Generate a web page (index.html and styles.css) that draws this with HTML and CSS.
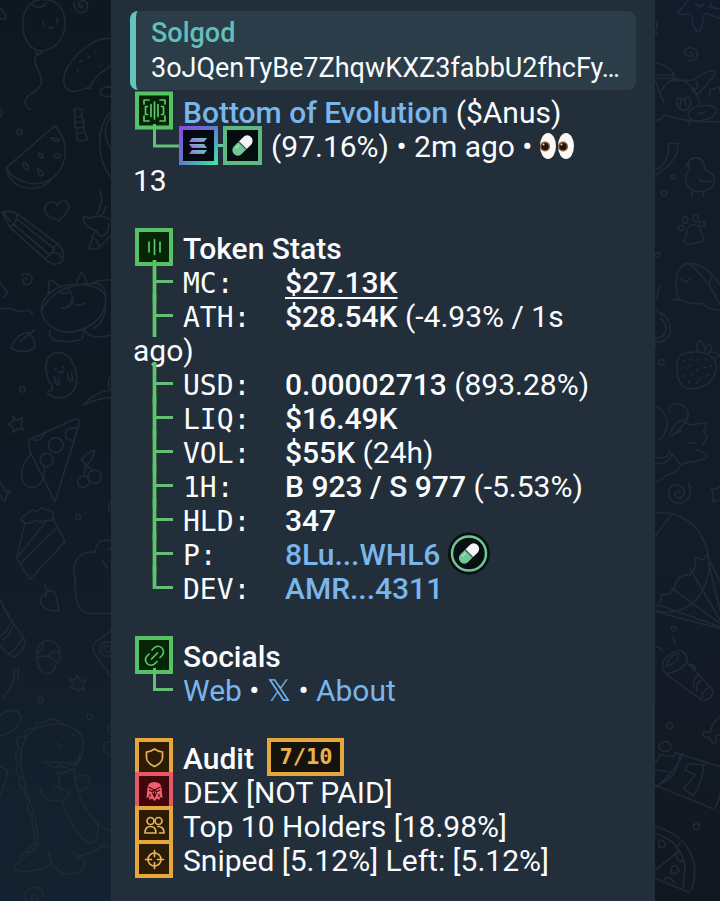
FILE: index.html
```html
<!DOCTYPE html>
<html lang="en">
  <head>
    <meta charset="UTF-8" />
    <meta name="viewport" content="width=device-width, initial-scale=1.0" />
    <title>Solgod - Bottom of Evolution</title>
    <link rel="stylesheet" href="styles.css">
  </head>
  <body>
    <!-- Shared icons -->
    <svg class="defs" aria-hidden="true">
      <defs>
        <linearGradient id="sol-frame" x1="0" y1="0" x2="1" y2="1">
          <stop offset="0" stop-color="#8a4be0" />
          <stop offset="0.45" stop-color="#5f78d0" />
          <stop offset="1" stop-color="#3fe0a8" />
        </linearGradient>
        <linearGradient id="sol-bars" x1="0" y1="1" x2="1" y2="0">
          <stop offset="0" stop-color="#a65be8" />
          <stop offset="0.5" stop-color="#8f93d8" />
          <stop offset="1" stop-color="#4fdcae" />
        </linearGradient>
      </defs>
      <symbol id="branch" viewBox="0 0 50 34" overflow="visible">
        <path class="stem-edge" d="M21.5 -6V37" />
        <path class="stem" d="M21.5 -6V37M21.5 15.5H40" />
      </symbol>
      <symbol id="branch-end" viewBox="0 0 50 34" overflow="visible">
        <path class="stem-edge" d="M21.5 -6V17" />
        <path class="stem" d="M21.5 -6V15.5H40" />
      </symbol>
      <symbol id="pill" viewBox="0 0 24 24">
        <g transform="rotate(45 12 12)">
          <path d="M7.5 12V6.5a4.5 4.5 0 0 1 9 0V12Z" fill="#f6f4f6" />
          <path d="M7.5 12V17.5a4.5 4.5 0 0 0 9 0V12Z" fill="#6fc795" />
          <path d="M7.5 12H16.5" stroke="#3c4a48" stroke-width="1" />
          <path d="M9.7 14v3.5" stroke="#a5e3bf" stroke-width="1.2" stroke-linecap="round" />
        </g>
      </symbol>
    </svg>

    <div class="chat">
      <aside class="wallpaper left" aria-hidden="true">
        <svg viewBox="0 0 333 2703" preserveAspectRatio="xMinYMin slice">
          <!-- balloon, swirl, bean -->
          <path d="M115 153C80 140 66 100 68 70C70 20 95 -2 130 -2C170 -2 195 25 195 70C195 115 165 155 115 153ZM95 12C105 25 130 25 138 10M130 62v14M171 54v14M145 80q8 10 16 0M107 155l6 10l12 -8M108 168C95 200 125 210 125 245C125 275 70 280 76 310C78 322 85 328 92 327" />
          <path d="M222 5C222 50 265 45 262 15C260 -5 235 0 236 15C238 28 252 22 246 14M0 25Q20 40 17 55Q10 60 0 55" />
          <path d="M333 116C290 108 235 150 200 205C185 235 190 270 215 274C240 278 255 258 270 266C275 240 290 225 333 198M333 262C305 255 295 275 305 286Q315 292 333 288M240 185l4 -4M265 172l4 -3M285 155l3 2M300 200l3 -3M230 210l4 2" />
          <!-- candy, watermelon -->
          <path d="M222 330q12 -10 25 0l-3 14q12 25 7 48l12 25q-15 10 -34 2l3 -22q-12 -28 -7 -50ZM224 347q12 8 22 -2M222 362q14 10 28 0M224 380q14 8 28 -2M230 397q12 6 22 -4" />
          <path d="M165 377L19 503C35 540 100 565 145 542C195 515 220 440 165 377ZM19 503C25 560 100 590 155 540M152 416q12 -8 26 4q-12 8 -26 -4M115 459q14 0 14 15q-14 0 -14 -15M159 466q14 -12 24 2q-14 12 -24 -2M70 488q16 4 16 22q-18 0 -16 -22M113 506q16 6 16 20q-14 8 -16 -20M333 335Q298 370 299 430Q302 500 333 532M333 350Q310 380 318 415L333 450" />
          <circle cx="59" cy="396" r="8" /><path d="M0 325q12 12 0 24" />
          <!-- heart, pencil, plane -->
          <path d="M172 617C160 595 128 610 136 635C142 655 165 652 177 663C185 650 208 640 206 618C202 598 175 600 172 617Z" />
          <path d="M6 637Q30 630 51 641L177 735Q200 765 185 785Q170 800 145 785L30 682ZM6 637L30 682Q50 670 51 641M40 672L150 765M52 658L165 748M158 760Q160 730 178 735M138 780Q145 760 160 758Q180 755 182 775M20 632l-8 10l22 24" />
          <path d="M298 570Q315 600 290 642M318 620Q315 635 302 648M333 660Q300 640 270 655L250 650Q250 680 285 690L267 745Q290 755 305 735L333 705M290 690Q295 715 312 705Q330 690 325 670M275 712Q290 715 298 740" />
          <!-- swirl, cat, leaf -->
          <path d="M65 825Q80 815 95 830Q100 850 80 855Q65 850 70 838Q78 828 84 838M0 845L24 880L10 890M0 926L30 925Q60 940 85 930L98 942" />
          <path d="M124 935C120 890 170 850 230 853C290 855 318 870 317 900C316 960 260 990 215 996C165 1000 128 965 124 935ZM145 880L147 845Q155 835 175 858M230 850L243 818Q255 820 262 855M124 935Q160 850 285 850Q310 850 317 880M333 840Q300 838 275 850M150 992Q145 1015 170 1022Q210 1030 245 1018L253 992M255 985Q255 1005 285 1010Q310 1012 333 1005M280 985Q310 975 317 920M182 880l22 -2M205 865L218 890Q215 925 185 925M215 900Q225 925 253 910" />
          <path d="M32 1045Q50 1000 85 998Q110 1020 103 1045Q70 1065 32 1045ZM60 1025L103 990" />
          <!-- ghost, pizza, star -->
          <path d="M145 1140C130 1090 140 1060 175 1057C220 1060 235 1120 228 1155C220 1190 175 1205 145 1182Q138 1170 155 1172Q162 1160 145 1140ZM165 1108l4 -2M187 1102l4 -2M175 1115q10 8 16 -4M163 1130Q165 1160 178 1152L175 1135M203 1120Q205 1148 218 1142L215 1120" />
          <circle cx="67" cy="1168" r="8" />
          <path d="M333 1130Q318 1150 333 1170M333 1170Q285 1175 249 1216Q290 1195 333 1192M40 1247L48 1262L68 1252L63 1274L72 1290L53 1285L40 1298L38 1280L24 1272L38 1266Z" />
          <path d="M85 1320L225 1257Q240 1255 238 1270L165 1505L90 1355ZM98 1313Q115 1335 135 1298M228 1285Q195 1280 196 1305Q200 1322 216 1320" /><circle cx="167" cy="1335" r="22" />
          <circle cx="140" cy="1380" r="20" /><path d="M92 1362Q60 1400 65 1435Q75 1470 110 1460Q140 1440 132 1395" />
          <!-- cherries, cake -->
          <circle cx="250" cy="1445" r="17" /><circle cx="284" cy="1430" r="20" />
          <path d="M252 1428L258 1395L245 1380Q260 1355 283 1352Q280 1380 258 1395L278 1412M0 1445L20 1475L32 1475L20 1485L15 1505L0 1485" />
          <path d="M75 1568Q60 1565 66 1552Q80 1538 85 1540Q95 1525 110 1535Q130 1515 140 1530Q165 1530 160 1550Q160 1565 140 1560Q120 1572 105 1560Q90 1575 75 1568ZM75 1568L50 1675L90 1738L195 1625L160 1558M50 1675L140 1562M62 1690L172 1582" />
          <circle cx="234" cy="1551" r="8" />
          <!-- leaf, pepper, pencil -->
          <path d="M135 1755L142 1775Q120 1790 122 1805Q130 1835 177 1832L168 1785Q155 1765 142 1775ZM138 1775v16M333 1505Q320 1520 333 1538M333 1623Q290 1610 285 1657Q235 1650 222 1700L228 1790Q235 1845 280 1840H333M307 1680l15 25M318 1650l15 -4M220 1710l8 40" />
          <path d="M0 1800L35 1862L75 1920Q80 1940 45 1970Q25 1970 0 1935M35 1862Q25 1890 0 1910M42 1870Q35 1900 8 1920M68 1915Q50 1945 30 1960M5 1810l22 45" />
          <!-- acorn, star, camera -->
          <path d="M110 1975Q105 1925 145 1921Q185 1925 178 1980Q175 1990 170 1985Q165 2020 138 2022Q115 2015 113 1985ZM113 1972Q140 1960 170 1985M112 1960Q130 1955 128 1930M145 1970Q155 1950 178 1958M232 2025L240 2042L257 2040L248 2055L255 2068L240 2065L238 2073L225 2065L210 2063L220 2050L210 2038L226 2040Z" />
          <circle cx="121" cy="2099" r="8" /><circle cx="269" cy="2150" r="8" />
          <path d="M333 1892L287 1925Q275 1940 280 1955L333 2030M42 2002Q50 2050 8 2093M55 2005v35M0 2145Q20 2130 45 2132Q70 2140 60 2165Q40 2200 0 2208M333 2170Q315 2190 333 2205M333 2225Q305 2225 312 2248Q325 2270 333 2270M0 2300L22 2310L20 2335L0 2390" />
          <circle cx="322" cy="1947" r="22" /><circle cx="322" cy="1947" r="10" />
          <!-- dinosaur -->
          <path d="M170 2320Q240 2320 250 2240C255 2190 200 2165 150 2175C80 2180 60 2230 62 2290C70 2380 125 2460 112 2540Q90 2560 50 2590Q35 2610 70 2614Q120 2615 155 2590M146 2555Q150 2600 190 2620Q250 2625 255 2590Q255 2575 235 2575L220 2555M130 2287L225 2288Q245 2270 238 2260M145 2292Q160 2310 178 2295Q195 2310 208 2293Q225 2300 230 2285M178 2320V2365M120 2367C130 2410 185 2410 205 2390Q212 2365 190 2368L162 2360M188 2405C205 2465 240 2520 270 2530Q300 2530 293 2470C250 2430 225 2370 222 2310M228 2330Q270 2315 270 2345Q260 2370 240 2372M293 2470Q310 2490 333 2492M235 2568Q280 2560 310 2535L333 2545" />
          <path d="M75 2215Q70 2180 105 2185Q110 2160 138 2168Q150 2145 190 2172M62 2250Q45 2235 52 2215Q65 2205 75 2210M60 2290Q38 2275 52 2250M62 2330Q42 2320 50 2290M72 2370Q50 2360 60 2330M85 2400Q70 2390 75 2372M98 2450Q80 2440 85 2410M108 2500Q92 2480 98 2452M110 2540Q98 2520 106 2500M85 2560Q80 2545 105 2530M62 2582Q60 2555 90 2555M172 2228l8 14M214 2200l8 9" />
          <path d="M80 2703Q65 2670 100 2662Q130 2665 130 2690M98 2703Q90 2685 105 2682Q115 2685 112 2700" />
        </svg>
      </aside>

      <main class="bubble">
        <blockquote class="reply">
          <strong>Solgod</strong>
          <p>3oJQenTyBe7ZhqwKXZ3fabbU2fhcFy…</p>
        </blockquote>

        <div class="message">
          <section class="token">
            <p>
              <svg class="icon" viewBox="0 0 50 34" aria-hidden="true">
                <rect class="box" x="4" y="-2.5" width="34" height="34" />
                <g class="glyph">
                  <path d="M11 8V4h5M27 4h5v4M11 20v5h5M27 25h5v-5M14.5 10.500h-2v8h2M28.500 10.500h2v8h-2" />
                  <path d="M18 8.500v12M21.500 6v17M25 8.500v12" />
                </g>
                <path class="stem" d="M21.5 28V50H47" />
              </svg><a href="#" class="name">Bottom of Evolution</a> ($Anus)
            </p>
            <p>
              <svg class="chain" viewBox="0 0 138 34" aria-hidden="true">
                <path d="M84 15.5h7" stroke="#5cc9a0" stroke-width="3" />
                <rect x="48" y="-2" width="35" height="35" fill="#060910" stroke="url(#sol-frame)" stroke-width="4" />
                <g fill="url(#sol-bars)">
                  <path d="M59 8h15l-3 4H56Z" />
                  <path d="M56 14h15l3 4H59Z" />
                  <path d="M59 20h15l-3 4H56Z" />
                </g>
                <rect x="92" y="-2" width="35" height="35" fill="#060d0f" stroke="#5db883" stroke-width="4" />
                <use href="#pill" x="95" y="1" width="29" height="29" />
              </svg>(97.16%) • 2m ago •
              <svg class="eyes" viewBox="0 0 34 28" role="img" aria-label="eyes">
                <ellipse cx="8" cy="14" rx="8" ry="13" fill="#fbf8f7" />
                <ellipse cx="26" cy="14" rx="8" ry="13" fill="#fbf8f7" />
                <circle cx="5" cy="14.5" r="5" fill="#8a572f" /><circle cx="5" cy="14.5" r="3.5" fill="#25120c" />
                <circle cx="23" cy="14.5" r="5" fill="#8a572f" /><circle cx="23" cy="14.5" r="3.5" fill="#25120c" />
                <circle cx="3.5" cy="12.5" r="1" fill="#e8dcd4" /><circle cx="21.5" cy="12.5" r="1" fill="#e8dcd4" />
              </svg>
              13
            </p>
          </section>

          <section>
            <h2>
              <svg class="icon" viewBox="0 0 50 34" aria-hidden="true">
                <rect class="box" x="4" y="-2" width="34" height="34" />
                <path class="glyph" d="M16 10v10M21.5 7.500v15M27 10v10" />
                <path class="stem" d="M21.5 28V40" />
              </svg>Token Stats
            </h2>
            <ul class="stats">
              <li><svg class="icon" aria-hidden="true"><use href="#branch" width="50" height="34" /></svg><span class="label">MC:</span><b><u>$27.13K</u></b></li>
              <li><svg class="icon" aria-hidden="true"><use href="#branch" width="50" height="34" /></svg><span class="label">ATH:</span><b>$28.54K</b> (-4.93% / 1s ago)</li>
              <li><svg class="icon" aria-hidden="true"><use href="#branch" width="50" height="34" /></svg><span class="label">USD:</span><b>0.00002713</b> (893.28%)</li>
              <li><svg class="icon" aria-hidden="true"><use href="#branch" width="50" height="34" /></svg><span class="label">LIQ:</span><b>$16.49K</b></li>
              <li><svg class="icon" aria-hidden="true"><use href="#branch" width="50" height="34" /></svg><span class="label">VOL:</span><b>$55K</b> (24h)</li>
              <li><svg class="icon" aria-hidden="true"><use href="#branch" width="50" height="34" /></svg><span class="label">1H:</span><b>B 923 / S 977</b> (-5.53%)</li>
              <li><svg class="icon" aria-hidden="true"><use href="#branch" width="50" height="34" /></svg><span class="label">HLD:</span><b>347</b></li>
              <li>
                <svg class="icon" aria-hidden="true"><use href="#branch" width="50" height="34" /></svg><span class="label">P:</span><a href="#" class="name">8Lu...WHL6</a>
                <svg class="coin" viewBox="0 0 42 34" aria-hidden="true">
                  <circle cx="21" cy="15.5" r="21" fill="#0a1012" />
                  <circle cx="21" cy="15.5" r="17" fill="none" stroke="#6fc795" stroke-width="2.5" />
                  <use href="#pill" x="6.5" y="1" width="29" height="29" />
                </svg>
              </li>
              <li><svg class="icon" aria-hidden="true"><use href="#branch-end" width="50" height="34" /></svg><span class="label">DEV:</span><a href="#" class="name">AMR...4311</a></li>
            </ul>
          </section>

          <section>
            <h2>
              <svg class="icon" viewBox="0 0 50 34" aria-hidden="true">
                <rect class="box" x="4" y="-2" width="34" height="34" />
                <path class="glyph" d="M19 10L21 8A5.400 5.400 0 0 1 29 15.500L27 17.500M24 21.500L22 23.500A5.400 5.400 0 0 1 14 16L16 14M18.500 19L24.500 13" />
                <path class="stem" d="M21.5 28V49.5H40" />
              </svg>Socials
            </h2>
            <p class="indent"><a href="#">Web</a> • <a href="#">𝕏</a> • <a href="#">About</a></p>
          </section>

          <section>
            <h2>
              <svg class="icon warn" viewBox="0 0 50 34" aria-hidden="true">
                <rect class="box" x="4" y="-2" width="34" height="34" />
                <path class="glyph" d="M21.5 7Q25 9.5 29.5 10V16Q29 21 21.5 24.5Q14 21 13.5 16V10Q18 9.5 21.5 7Z" />
              </svg>Audit <span class="score">7/10</span>
            </h2>
            <ul>
              <li>
                <svg class="icon bad" viewBox="0 0 50 34" aria-hidden="true">
                  <rect class="box" x="4" y="-2" width="34" height="34" />
                  <path d="M21.5 6Q28 6 28.5 12L29.5 22L27 21L26.5 24L24 22.5L21.5 25L19 22.5L16.5 24L16 21L13.5 22L14.5 12Q15 6 21.5 6Z" fill="#f0616c" />
                  <path d="M15.5 11L20.5 13.5L19.5 16L16 14M27.5 11L22.5 13.5L23.5 16L27 14M21.5 13V20M19.5 17L21.5 21L23.5 17M17 18v3M26 18v3" fill="none" stroke="#4a0710" stroke-width="1.2" />
                </svg>DEX [NOT PAID]
              </li>
              <li>
                <svg class="icon warn" viewBox="0 0 50 34" aria-hidden="true">
                  <rect class="box" x="4" y="-2" width="34" height="34" />
                  <g class="glyph">
                    <circle cx="17.5" cy="11" r="3.5" /><circle cx="25.5" cy="11" r="3.5" />
                    <path d="M12 23Q12 16.5 17.5 16.5Q23 16.5 23 23ZM25 16.5Q31 16.500 31 23H26.5" />
                  </g>
                </svg>Top 10 Holders [18.98%]
              </li>
              <li>
                <svg class="icon warn" viewBox="0 0 50 34" aria-hidden="true">
                  <rect class="box" x="4" y="-2" width="34" height="34" />
                  <g class="glyph">
                    <circle cx="21.5" cy="15.5" r="6.5" />
                    <path d="M21.5 6.5v6M21.5 18.5v6M12.500 15.5h6M24.5 15.5h6" />
                  </g>
                </svg>Sniped [5.12%] Left: [5.12%]
              </li>
            </ul>
          </section>
        </div>
      </main>

      <aside class="wallpaper right" aria-hidden="true">
        <svg viewBox="45 0 195 2703" preserveAspectRatio="xMinYMin slice">
          <!-- starfish, swirl, cow -->
          <path d="M145 0Q135 15 112 38Q115 45 150 42Q158 45 158 70Q165 95 175 95Q190 90 188 50Q195 38 205 42L240 55M165 12l10 2M170 16q14 8 22 -6M215 10L205 20L240 28M45 60q10 15 2 30M45 95q10 8 0 10" />
          <path d="M135 165Q130 145 150 142Q175 145 172 165Q165 185 145 182M150 155Q162 158 155 170Q145 170 140 162" />
          <path d="M45 187Q100 200 105 235H45M45 240L70 305M45 225H100M65 270Q90 230 125 240Q160 250 180 312M95 243L160 240Q200 210 225 212Q235 220 180 275Q170 290 155 268Q180 270 170 245M110 305Q110 285 130 300Q145 280 152 305Q150 330 130 332Q112 325 110 305ZM122 300v18M136 298v20M210 285Q205 265 222 268Q240 250 240 280M145 348Q145 320 185 318Q230 310 228 335Q220 360 170 363Q150 362 145 348ZM175 338q10 8 22 -4M45 360Q70 362 70 345Q150 370 240 365M140 360l10 15" />
          <!-- horn, duck, paw -->
          <path d="M45 510Q90 490 85 432L113 430Q120 480 45 526" /><circle cx="99" cy="530" r="6" /><circle cx="72" cy="580" r="8" />
          <path d="M147 505Q140 475 168 473Q195 475 193 508Q225 520 224 545Q215 575 170 575Q135 565 137 530Q138 515 152 510M147 485l-8 12l10 4M178 538Q190 550 215 543M157 575v15M190 575v15" />
          <path d="M145 680Q160 668 175 680Q195 710 188 722Q170 728 160 730Q140 738 132 722Q142 700 145 680Z" /><circle cx="123" cy="684" r="8" /><ellipse cx="135" cy="660" rx="8" ry="10" /><ellipse cx="167" cy="655" rx="8" ry="10" /><circle cx="186" cy="672" r="8" />
          <!-- whale, cup, strawberry -->
          <circle cx="53" cy="765" r="7" />
          <path d="M97 900L115 898L108 860Q105 795 145 790Q200 790 240 855M145 790Q200 830 240 915M115 898Q150 915 185 910Q210 930 240 930M122 835q12 18 28 2M215 832l-6 15" />
          <path d="M58 860L50 895M45 925L65 945M65 940Q95 960 90 1000Q75 1030 45 1025M60 955Q85 970 75 1000Q65 1015 45 1015M45 1045v-30" /><circle cx="64" cy="1087" r="8" />
          <path d="M112 1085Q115 1055 170 1056Q225 1060 229 1100Q225 1160 160 1166Q105 1170 112 1085ZM175 1058Q165 1030 178 1022Q195 1030 195 1055Q195 1035 210 1032Q220 1045 205 1060Q220 1050 240 1065L228 1075M130 1085l4 -4M150 1080l4 -4M172 1082l4 -4M195 1080l4 -4M125 1105l4 -4M148 1100l4 -4M170 1112l4 -4M192 1105l4 -4M210 1100l4 -4M130 1130l4 -4M152 1125l4 -4M178 1138l4 -4M200 1128l4 -4M145 1148l4 -4M168 1150l4 -4" />
          <!-- cats -->
          <path d="M45 1215Q85 1240 82 1275Q75 1310 55 1320M90 1240Q82 1215 105 1210Q150 1215 144 1250Q130 1285 90 1310M90 1300Q100 1270 125 1260L150 1275L200 1268L190 1295L203 1310L188 1335M100 1300q10 4 18 -4M118 1285l6 10M148 1330l18 -2" />
          <path d="M45 1370Q80 1385 90 1350M45 1390Q90 1395 95 1360L122 1395Q110 1420 80 1425Q60 1445 45 1447M122 1395Q145 1385 165 1385Q210 1375 200 1365Q180 1350 165 1350" />
          <!-- swirl, star, parachute -->
          <path d="M145 1450Q165 1490 125 1510Q80 1510 87 1470Q100 1440 130 1465Q140 1490 115 1495Q98 1485 108 1475Q118 1470 120 1480M240 1458L232 1465L214 1468L220 1485L218 1505L240 1500" />
          <path d="M45 1540Q130 1530 180 1600Q215 1660 205 1720Q185 1820 100 1835Q70 1840 45 1830M93 1545L45 1608M200 1665L190 1680L165 1673Q170 1710 150 1725Q115 1720 105 1758Q90 1790 65 1782Q65 1810 45 1820M200 1665L240 1745M205 1690L240 1830M150 1705L240 1860M92 1762L240 1870M55 1815L240 1880M45 1835L240 1885" />
          <!-- torch, map, pizza -->
          <circle cx="101" cy="1886" r="7" /><path d="M98 1910l8 20M50 1940q14 4 18 14M45 1985h5" />
          <path d="M67 1998Q70 1965 120 1950Q145 1960 140 1990Q110 2020 75 2020ZM78 2000Q85 1970 115 1960Q120 1985 78 2000M75 2020L185 2100Q210 2105 218 2080Q220 2065 205 2055L140 1985M145 1995Q165 1990 165 2010M170 2075Q165 2045 190 2038M160 2058Q160 2035 175 2025M185 2095Q185 2070 212 2060" />
          <circle cx="89" cy="2177" r="9" /><ellipse cx="75" cy="2240" rx="18" ry="15" />
          <path d="M240 2150Q215 2170 212 2195L188 2198Q190 2215 208 2212L218 2232L230 2225L228 2205L240 2205" />
          <path d="M45 2290L60 2265L100 2270L105 2258L240 2300M45 2355L215 2425Q230 2430 240 2380M48 2362Q110 2310 130 2260M60 2350Q110 2340 120 2262M45 2310L85 2315M145 2290L192 2295L205 2288M145 2290L135 2310L165 2325L140 2355L130 2365L160 2388Q190 2340 190 2298" /><circle cx="169" cy="2480" r="9" />
          <path d="M45 2478Q150 2510 164 2600Q165 2670 145 2676L45 2635M45 2500Q125 2525 135 2600L130 2660M45 2610L115 2555M110 2555Q100 2580 130 2585M55 2525q8 -12 22 5q0 15 -18 12ZM95 2600q14 -10 22 12q-10 12 -24 8ZM115 2550q-10 -10 5 -20M75 2640Q80 2620 105 2650" />
        </svg>
      </aside>
    </div>
  </body>
</html>
```

FILE: styles.css
```css
* {
  box-sizing: border-box;
  margin: 0;
  padding: 0;
}

body {
  font-family: Roboto, "Noto Sans", sans-serif;
  font-size: 30px;
  line-height: 34px;
  color: #fafcff;
  background: #111a25;
}

a {
  color: #78b6ec;
  text-decoration: none;
}

ul {
  list-style: none;
}

b,
h2,
.name {
  font-weight: 500;
}

h2 {
  font-size: 30px;
}

u {
  text-decoration-thickness: 2px;
  text-underline-offset: 4px;
  text-decoration-skip-ink: none;
}

.defs {
  display: block;
  width: 0;
  height: 0;
}

.chat {
  display: grid;
  grid-template-columns: 111px minmax(0, 1fr) 65px;
  min-height: 100vh;
}

/* Wallpaper */
.wallpaper {
  overflow: hidden;
}

.wallpaper svg {
  display: block;
  width: 100%;
  height: 100vh;
  fill: none;
  stroke-width: 5;
  stroke-linecap: round;
  stroke-linejoin: round;
}

.left {
  background: linear-gradient(#0f1820, #101923 50%, #142230);
}

.left svg {
  stroke: #1d2a36;
}

.right {
  background: linear-gradient(#131b2a, #131b29 60%, #11181f);
}

.right svg {
  stroke: #202939;
}

/* Message */
.bubble {
  background: #222e39;
  padding: 11px 19px 20px;
}

.reply {
  background: #2b3d48;
  border-left: 6px solid #62c5c0;
  border-radius: 8px;
  padding: 5px 15px 4px;
  font-size: 27px;
  line-height: 35px;
}

.reply strong {
  display: block;
  font-weight: 500;
  color: #62bfba;
}

.reply p {
  overflow: hidden;
  white-space: nowrap;
  text-overflow: ellipsis;
}

.message {
  padding: 6px 34px 0 3px;
}

section + section {
  margin-top: 34px;
}

.label {
  display: inline-block;
  width: 102px;
  font-family: "DejaVu Sans Mono", monospace;
  font-size: 28px;
  line-height: 28px;
}

.indent {
  padding-left: 50px;
}

.score {
  display: inline-block;
  margin: -4px 0 -4px 6px;
  padding: 0 8px;
  border: 4px solid #e5a63c;
  background: #15130f;
  color: #e9b050;
  font-family: "DejaVu Sans Mono", monospace;
  font-size: 22px;
  font-weight: bold;
  line-height: 30px;
  vertical-align: top;
}

/* Icons */
.icon,
.chain,
.coin,
.eyes {
  display: inline-block;
  height: 34px;
  overflow: visible;
  vertical-align: top;
}

.icon {
  width: 50px;
}

.chain {
  width: 138px;
}

.coin {
  width: 42px;
}

.eyes {
  width: 34px;
  height: 28px;
  margin-top: 2px;
}

.box {
  fill: #042506;
  stroke: #56c265;
  stroke-width: 4;
}

.glyph {
  fill: none;
  stroke: #5fc46c;
  stroke-width: 1.7;
  stroke-linecap: round;
  stroke-linejoin: round;
}

.stem {
  fill: none;
  stroke: #62c074;
  stroke-width: 3;
}

.stem-edge {
  stroke: #43a04d;
  stroke-width: 4;
}

.warn .box {
  fill: #2c1b05;
  stroke: #e5a63c;
}

.warn .glyph {
  stroke: #e5b35c;
}

.bad .box {
  fill: #42060d;
  stroke: #e55865;
}
```
